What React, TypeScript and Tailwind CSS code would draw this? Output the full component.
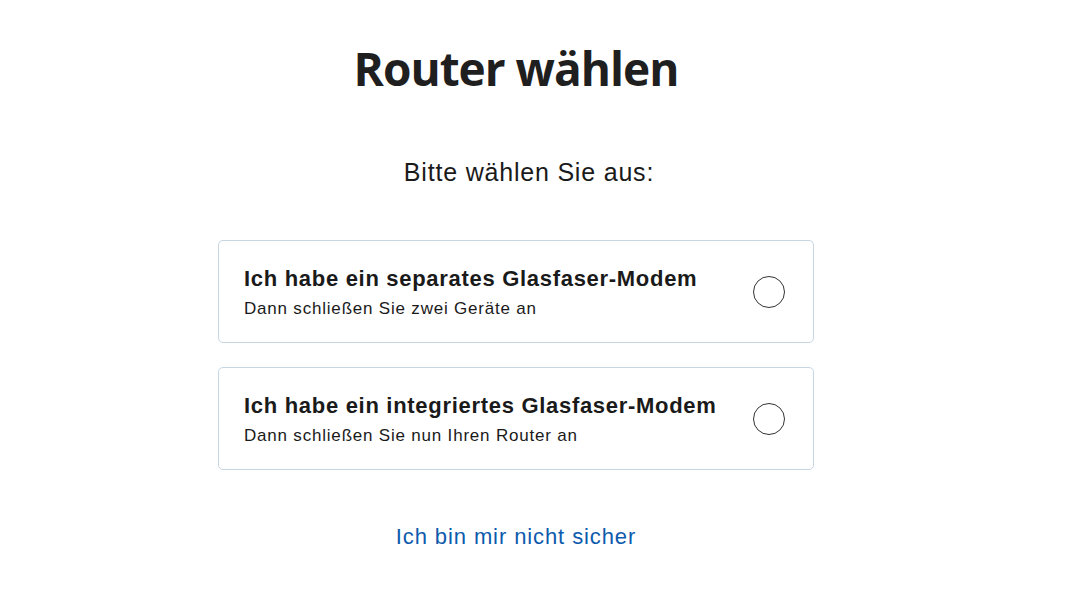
import React from "react";

const options = [
  {
    title: "Ich habe ein separates Glasfaser-Modem",
    text: "Dann schließen Sie zwei Geräte an",
  },
  {
    title: "Ich habe ein integriertes Glasfaser-Modem",
    text: "Dann schließen Sie nun Ihren Router an",
  },
];

const OptionCard = ({ title, text }: { title: string; text: string }) => {
  return (
    <button className="w-[596px] h-[103px] flex items-center justify-between border border-[#c8d6e2] rounded-[5px] bg-white pl-[25px] pr-[28px] text-left">
      <div className="flex flex-col pt-[2px]">
        <span className="text-[22px] font-bold text-[#1a1a1a] leading-[26px] tracking-[0.7px]">
          {title}
        </span>
        <span className="text-[17px] text-[#1a1a1a] leading-[22px] mt-[6px] tracking-[0.8px]">
          {text}
        </span>
      </div>
      <span className="w-[32px] h-[32px] rounded-full border-[1.5px] border-[#333]" />
    </button>
  );
};

export default function App() {
  return (
    <div className="w-[1032px] h-[602px] bg-white flex flex-col items-center font-['Liberation_Sans',Arial,sans-serif]">
      <h1 className="mt-[40px] text-[46px] leading-[56px] font-bold tracking-[-1px] text-[#1f1f1f] font-['Open_Sans',sans-serif]">
        Router wählen
      </h1>
      <p className="mt-[62px] text-[25px] leading-[28px] tracking-[0.8px] text-[#1a1a1a] pl-[26px]">
        Bitte wählen Sie aus:
      </p>
      <div className="mt-[54px] flex flex-col gap-[24px]">
        {options.map((o) => (
          <OptionCard key={o.title} title={o.title} text={o.text} />
        ))}
      </div>
      <a className="mt-[53px] text-[22px] leading-[28px] tracking-[0.9px] text-[#0d5bad] cursor-pointer">
        Ich bin mir nicht sicher
      </a>
    </div>
  );
}
